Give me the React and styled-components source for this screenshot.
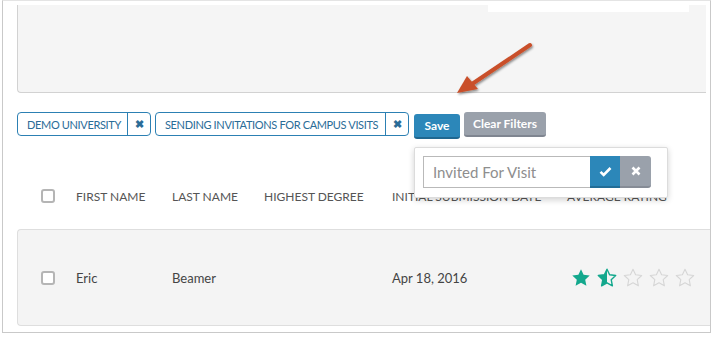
import React from "react";
import styled, { createGlobalStyle } from "styled-components";

const GlobalStyle = createGlobalStyle`
  html, body {
    margin: 0;
    padding: 0;
    background: #fff;
    font-family: Lato, "Open Sans", sans-serif;
  }
`;

const Frame = styled.div`
  position: relative;
  box-sizing: border-box;
  margin-left: 2px;
  width: 709px;
  height: 333px;
  border: 1px solid #c9c9c9;
  border-top-color: #e4e4e4;
  background: #fff;
  overflow: hidden;
`;

const TopPanel = styled.div`
  box-sizing: border-box;
  display: flex;
  justify-content: flex-end;
  height: 88px;
  margin: 4px 4px 0 14px;
  padding-right: 17px;
  background: #f5f5f5;
  border-left: 1px solid #d2d2d2;
  border-bottom: 1px solid #d2d2d2;
  border-bottom-left-radius: 4px;
`;

const WhiteStrip = styled.div`
  width: 201px;
  height: 7px;
  background: #fff;
`;

const FilterBar = styled.div`
  display: flex;
  align-items: flex-start;
  gap: 4px;
  margin-top: 19px;
  padding-left: 14px;
`;

const Tag = styled.div`
  box-sizing: border-box;
  display: flex;
  height: 24px;
  border: 1px solid #2c80b3;
  border-radius: 4px;
  color: #2a6c97;
  font-size: 11px;
  letter-spacing: -0.35px;
  white-space: nowrap;
  text-transform: uppercase;
`;

const TagLabel = styled.span`
  box-sizing: border-box;
  display: flex;
  align-items: center;
  width: ${(p) => p.$w}px;
  padding-left: 9px;
  border-right: 1px solid #2c80b3;
`;

const TagClose = styled.span`
  display: flex;
  align-items: center;
  justify-content: center;
  width: 22px;
  font-size: 11px;
  font-weight: 700;
`;

const Button = styled.button`
  box-sizing: border-box;
  height: 25px;
  margin-top: ${(p) => p.$offset || 0}px;
  margin-left: ${(p) => p.$gap || 0}px;
  width: ${(p) => p.$w}px;
  padding: 0;
  border: none;
  border-bottom: 2px solid ${(p) => (p.$grey ? "#7f8590" : "#1f6790")};
  border-radius: 3px;
  background: ${(p) => (p.$grey ? "#9aa1ab" : "#2c87b9")};
  color: #fff;
  font-family: Lato, sans-serif;
  font-size: 12px;
  font-weight: 700;
`;

const Grid = styled.div`
  display: grid;
  grid-template-columns: 35px 96px 92px 128px 175px 1fr;
  align-items: center;
`;

const HeaderRow = styled(Grid)`
  height: 30px;
  margin-top: 42px;
  padding-left: 38px;
  color: #555;
  font-size: 12px;
  text-transform: uppercase;
`;

const DataRow = styled(Grid)`
  box-sizing: border-box;
  height: 97px;
  margin: 18px 0 0 14px;
  padding-left: 23px;
  background: #f4f4f4;
  border: 1px solid #dedede;
  border-right: none;
  border-radius: 4px 0 0 4px;
  color: #444;
  font-size: 13px;
`;

const Check = styled.span`
  box-sizing: border-box;
  display: block;
  width: 14px;
  height: 14px;
  border: 2px solid #b5b5b5;
  border-radius: 3px;
  background: #fff;
`;

const Stars = styled.div`
  display: flex;
  gap: 6px;
  margin-left: 4px;
`;

const Popover = styled.div`
  position: absolute;
  left: 411px;
  top: 146px;
  box-sizing: border-box;
  display: flex;
  width: 254px;
  height: 51px;
  padding: 8px 0 0 8px;
  background: #fff;
  border: 1px solid #dcdcdc;
  border-radius: 2px;
  box-shadow: 0 2px 6px rgba(0, 0, 0, 0.18);
`;

const Input = styled.div`
  box-sizing: border-box;
  display: flex;
  align-items: center;
  width: 167px;
  height: 32px;
  padding-left: 9px;
  border: 1px solid #b9b9b9;
  border-right: none;
  color: #8e8e8e;
  font-size: 15px;
`;

const IconButton = styled.span`
  box-sizing: border-box;
  display: flex;
  align-items: center;
  justify-content: center;
  width: ${(p) => p.$w}px;
  height: 32px;
  background: ${(p) => (p.$grey ? "#9aa1ab" : "#2c87b9")};
  border-bottom: 2px solid ${(p) => (p.$grey ? "#868c96" : "#226d97")};
  border-radius: ${(p) => (p.$grey ? "0 3px 3px 0" : "0")};
`;

const Arrow = styled.svg`
  position: absolute;
  left: 437px;
  top: 29px;
`;

const STAR =
  "M10 1.2l2.6 5.6 6.1.7-4.5 4.2 1.2 6.1L10 14.8 4.6 17.8l1.2-6.1L1.3 7.5l6.1-.7z";

const Star = ({ kind }) => {
  const teal = "#13a88d";
  if (kind === "full")
    return (
      <svg width="20" height="20" viewBox="0 0 20 20">
        <path d={STAR} fill={teal} />
      </svg>
    );
  if (kind === "half")
    return (
      <svg width="20" height="20" viewBox="0 0 20 20">
        <defs>
          <clipPath id="halfclip">
            <rect x="0" y="0" width="10" height="20" />
          </clipPath>
        </defs>
        <path d={STAR} fill={teal} clipPath="url(#halfclip)" />
        <path d={STAR} fill="none" stroke={teal} strokeWidth="1.4" strokeLinejoin="round" />
      </svg>
    );
  return (
    <svg width="20" height="20" viewBox="0 0 20 20">
      <path d={STAR} fill="none" stroke="#d6d6d6" strokeWidth="1.1" strokeLinejoin="round" />
    </svg>
  );
};

const App = () => (
  <>
    <GlobalStyle />
    <Frame>
      <TopPanel>
        <WhiteStrip />
      </TopPanel>

      <FilterBar>
        <Tag>
          <TagLabel $w={110}>Demo University</TagLabel>
          <TagClose>✖</TagClose>
        </Tag>
        <Tag>
          <TagLabel $w={230}>Sending Invitations for Campus Visits</TagLabel>
          <TagClose>✖</TagClose>
        </Tag>
        <Button $w={46} $offset={2} $gap={1}>Save</Button>
        <Button $w={82} $grey>Clear Filters</Button>
      </FilterBar>

      <HeaderRow>
        <Check />
        <span>First Name</span>
        <span>Last Name</span>
        <span>Highest Degree</span>
        <span>Initial Submission Date</span>
        <span>Average Rating</span>
      </HeaderRow>

      <DataRow>
        <Check />
        <span>Eric</span>
        <span>Beamer</span>
        <span />
        <span>Apr 18, 2016</span>
        <Stars>
          <Star kind="full" />
          <Star kind="half" />
          <Star />
          <Star />
          <Star />
        </Stars>
      </DataRow>

      <Popover>
        <Input>Invited For Visit</Input>
        <IconButton $w={30}>
          <svg width="13" height="11" viewBox="0 0 13 11">
            <path d="M1.5 5.8l3.2 3.2L11.5 2" fill="none" stroke="#fff" strokeWidth="2.6" />
          </svg>
        </IconButton>
        <IconButton $w={31} $grey>
          <svg width="10" height="10" viewBox="0 0 10 10">
            <path d="M1.5 1.5l7 7M8.5 1.5l-7 7" stroke="#fff" strokeWidth="2.6" />
          </svg>
        </IconButton>
      </Popover>

      <Arrow width="100" height="70" viewBox="0 0 100 70">
        <defs>
          <filter id="arrowShadow" x="-20%" y="-20%" width="140%" height="140%">
            <feDropShadow dx="1" dy="1.5" stdDeviation="1.2" floodColor="#000" floodOpacity="0.45" />
          </filter>
        </defs>
        <g filter="url(#arrowShadow)">
          <path d="M90 15L32 54" stroke="#c9502a" strokeWidth="4" strokeLinecap="round" />
          <path d="M17 63L27 46L38 59Z" fill="#c9502a" />
        </g>
      </Arrow>
    </Frame>
  </>
);

export default App;
